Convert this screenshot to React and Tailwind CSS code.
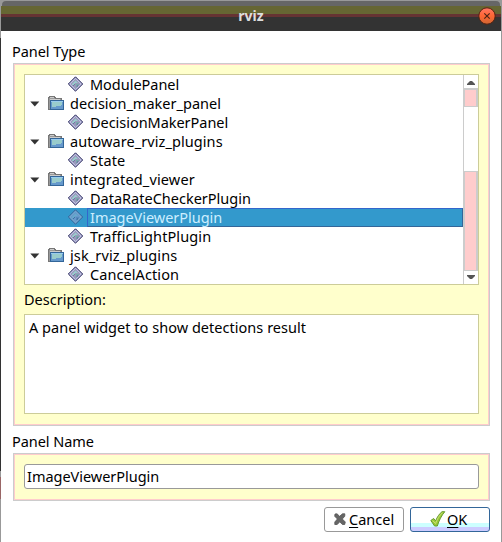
import React from "react";

const rows = [
  { label: "ModulePanel", track: "tracking-[-0.03px]" },
  { label: "decision_maker_panel", folder: true, track: "tracking-[0.02px]" },
  { label: "DecisionMakerPanel", track: "tracking-[-0.04px]" },
  { label: "autoware_rviz_plugins", folder: true, track: "tracking-[0.07px]" },
  { label: "State", track: "tracking-[0.1px]" },
  { label: "integrated_viewer", folder: true, track: "tracking-[0.16px]" },
  { label: "DataRateCheckerPlugin", track: "tracking-[0px]" },
  { label: "ImageViewerPlugin", selected: true, track: "tracking-[-0.03px]" },
  { label: "TrafficLightPlugin", track: "tracking-[0.1px]" },
  { label: "jsk_rviz_plugins", folder: true, track: "tracking-[0.12px]" },
  { label: "CancelAction", track: "tracking-[0.08px]" },
];

function Folder() {
  return (
    <svg width="16" height="15" viewBox="0 0 16 15" shapeRendering="crispEdges">
      <path d="M.5 13V1.500h1v-1h5v1h1v1h6V5H3v8z" fill="#999" stroke="#777" />
      <path d="M2 1.500h4M2 3.500h10" stroke="#ccc" />
      <path d="M2.500 13.500v-9h13v9z" fill="#6699cc" stroke="#336699" />
      <path d="M4 6h10v3l-3 1-7 1z" fill="#99cccc" />
      <path d="M3 5.500h12" stroke="#99ccee" />
    </svg>
  );
}

function Diamond({ selected }) {
  return (
    <svg width="16" height="16" viewBox="0 0 16 16">
      <path d="M7.500.8 14.700 8l-7.200 7.200L.3 8z" fill={selected ? "#6699cc" : "#9999bb"} stroke={selected ? "#336699" : "#333366"} strokeWidth="1" />
      <path d="M7.500 2.300 13.200 8l-5.700 5.700L1.800 8z" fill="none" stroke={selected ? "#77aacc" : "#ccccee"} strokeWidth="1" />
      <path d="M4 8l3.500-3.500L10 7H7v2H4z" fill={selected ? "#66aacc" : "#99cccc"} />
      <path d="M8 8h3.500L8 11.700z" fill={selected ? "#5588bb" : "#77aaaa"} />
      <path d="M5 10l2-2M10 9l-1 2" stroke={selected ? "#336699" : "#666699"} strokeWidth=".8" />
    </svg>
  );
}

function Row({ label, folder, selected, track }) {
  return (
    <div className={`flex h-[19px] shrink-0 ${selected ? "bg-[#3399cc]" : ""}`}>
      {folder ? (
        <div className="flex w-[42px] shrink-0 pl-[5px]">
          <svg className="mt-[7px]" width="10" height="6" viewBox="0 0 10 6">
            <path d="M.3.5h9L4.800 5.500z" fill="#333" />
          </svg>
          <div className="ml-[8px] mt-[2px]"><Folder /></div>
        </div>
      ) : (
        <div className="w-[62px] shrink-0 pl-[43px] pt-px"><Diamond selected={selected} /></div>
      )}
      <div className={`flex-1 border pl-[2px] leading-[16px] ${selected ? "border-[#3366cc] border-b-[#336699] border-r-[#336699] text-[#cceeff]" : "border-transparent"} ${track}`}>
        {label}
      </div>
    </div>
  );
}

function ScrollBar() {
  return (
    <div className="flex w-[15px] flex-col border-l border-[#ccc]">
      <div className="flex h-[13px] items-center justify-center">
        <svg className="mt-[2px]" width="8" height="5" viewBox="0 0 8 5"><path d="M0 5V4l3-3h2l3 3v1z" fill="#555" /></svg>
      </div>
      <div className="h-[19px] border-b border-l border-r-2 border-t-2 border-[#ccc] bg-[#ffcccc]" />
      <div className="h-[64px]" />
      <div className="h-[100px] border-b border-l border-r-2 border-t border-[#ccc] bg-[#ffcccc]" />
      <div className="flex h-[13px] items-center justify-center">
        <svg width="8" height="5" viewBox="0 0 8 5"><path d="M0 0v1l3 3h2l3-3V0z" fill="#555" /></svg>
      </div>
    </div>
  );
}

export default function App() {
  return (
    <div className="flex h-[542px] w-[502px] bg-[#999] font-['Noto_Sans','Open_Sans',sans-serif] text-[14.5px] text-black">
      <div className="flex w-px shrink-0 flex-col">
        <div className="h-[38px] bg-[#999]" />
        <div className="h-[433px] bg-[#333]" />
        <div className="mt-[6px] h-[22px] bg-[#996666]" />
      </div>
      <div className="flex h-[542px] w-[500px] shrink-0 flex-col bg-white">
        <header className="relative h-[31px] shrink-0 bg-[#333]">
          <div className="h-[6px] bg-[#999] pt-px">
            <div className="mx-px h-[5px] rounded-t-[4px] bg-[#666]" />
          </div>
          <div className="h-[8px] bg-[#666633]" />
          <div className="h-[3px] bg-[#663333]" />
          <h1 className="absolute inset-x-0 top-[6px] text-center text-[14px] font-bold leading-[20px] text-[#ddd]">rviz</h1>
          <svg className="absolute left-[477px] top-[7px]" width="18" height="18" viewBox="0 0 18 18">
            <defs>
              <linearGradient id="closeFill" x1="0" y1="0" x2="0" y2="1">
                <stop offset="0" stopColor="#ff7766" />
                <stop offset=".5" stopColor="#ff6633" />
                <stop offset="1" stopColor="#cc6633" />
              </linearGradient>
            </defs>
            <circle cx="9" cy="9" r="8.2" fill="url(#closeFill)" stroke="#552211" strokeWidth="1" />
            <path d="M6.300 6.300l5.400 5.400M11.700 6.300l-5.400 5.400" stroke="#4b2516" strokeWidth="1.2" />
          </svg>
        </header>
        <main className="flex flex-col pl-[12px] pr-[11px]">
          <div className="-ml-px mt-[10px] h-[22px] leading-[20px] tracking-[-0.05px]">Panel Type</div>
          <section className="flex h-[363px] flex-col border border-[#ccc]">
            <div className="flex flex-1 flex-col border border-[#ffcccc] bg-[#ffffcc] px-[9px] pt-[9px]">
              <div className="flex h-[211px] border border-[#cccc99] bg-white">
                <div className="flex min-w-0 flex-1 flex-col overflow-hidden">
                  {rows.map((row) => <Row key={row.label} {...row} />)}
                </div>
                <ScrollBar />
              </div>
              <div className="h-[29px] pt-[4px] leading-[20px]">Description:</div>
              <div className="h-[100px] border border-[#cccc99] bg-white px-[4px] pt-[2px] leading-[20px] tracking-[0.03px]">
                A panel widget to show detections result
              </div>
            </div>
          </section>
          <div className="-ml-px h-[27px] pt-[5px] leading-[20px] tracking-[-0.05px]">Panel Name</div>
          <section className="flex h-[48px] border border-[#ccc]">
            <div className="flex-1 border border-[#ffcccc] bg-[#ffffcc] px-[9px] pt-[9px]">
              <div className="h-[25px] rounded-[3px] border border-[#999] bg-white px-[2px] leading-[22px] tracking-[-0.03px]">ImageViewerPlugin</div>
            </div>
          </section>
          <div className="mt-[6px] flex justify-end gap-[6px]">
            <button className="flex h-[25px] w-[80px] rounded-[3px] border border-[#999] bg-white pl-[9px] leading-[22px]">
              <svg className="mt-[5px]" width="13" height="13" viewBox="0 0 13 13">
                <path d="M3 .8 5.600 3.300 8.500.8h2.300v2.400L8.300 6l3 3-.6 2.500H8.400L5.800 8.800 3.200 11.500H.8V9L3.400 6 .7 3.200 1 1z" fill="#666" stroke="#555" strokeWidth=".8" strokeLinejoin="round" />
              </svg>
              <span className="ml-[2px]"><span className="underline decoration-1 underline-offset-[2px]">C</span>ancel</span>
            </button>
            <button className="flex h-[25px] w-[80px] rounded-[3px] border border-[#336699] bg-[linear-gradient(#fff_15px,#ccffff_15px,#ccffff_19px,#ccccff_19px)] pl-[19px] leading-[22px]">
              <svg className="mt-[3px]" width="16" height="16" viewBox="0 0 16 16">
                <path d="M.8 9.500 3.700 7.500l2 2.300C7.200 6 9.500 2.500 12 .7h2.800C11.500 4.500 9 9.500 7.300 15H4.600z" fill="#99cc33" stroke="#669933" />
                <path d="M2.500 9.600 5.600 12.500C7 8.200 9.500 4 12.500 1.800" stroke="#ccdd77" fill="none" />
              </svg>
              <span className="ml-[1px]"><span className="underline decoration-1 underline-offset-[2px]">O</span>K</span>
            </button>
          </div>
        </main>
      </div>
    </div>
  );
}
